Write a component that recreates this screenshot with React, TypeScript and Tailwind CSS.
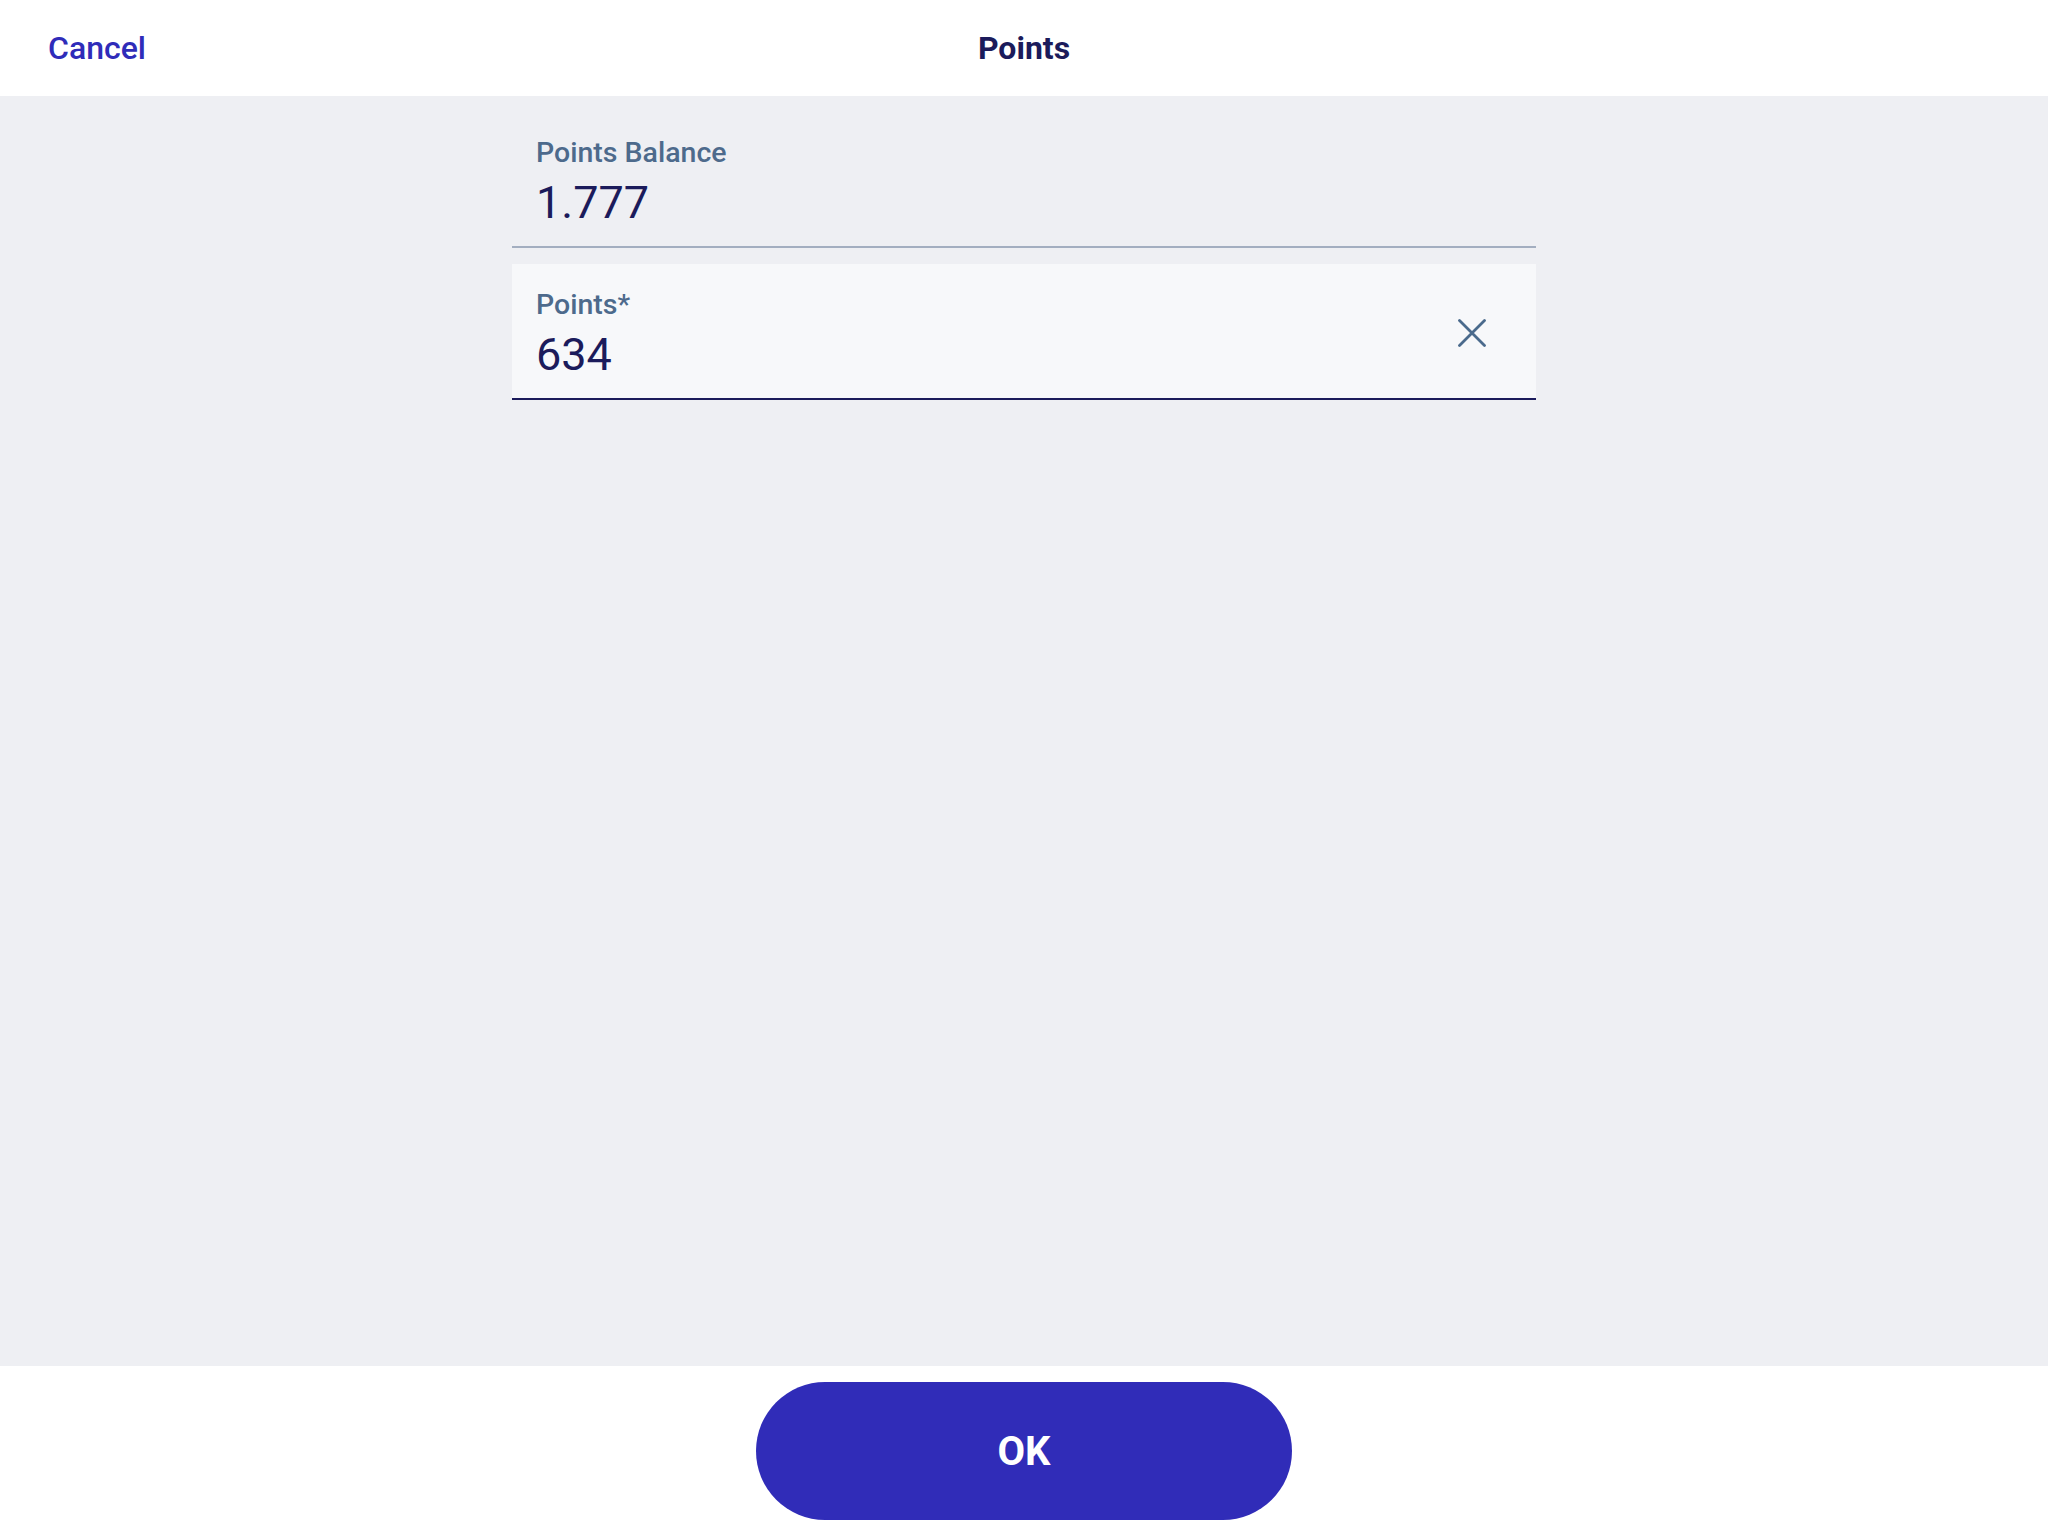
export default function App() {
  return (
    <div
      className="flex h-[1536px] w-full flex-col bg-[#eeeff3] text-[#1b1b5b]"
      style={{ fontFamily: "Roboto, 'Liberation Sans', sans-serif" }}
    >
      {/* Header */}
      <header className="relative flex h-[96px] shrink-0 items-center justify-center bg-white">
        <button className="absolute left-[48px] top-[28px] text-[32px] leading-[40px] font-medium text-[#2f2cb9]">
          Cancel
        </button>
        <h1 className="text-[32px] leading-[40px] font-bold text-[#1b1b5b]">Points</h1>
      </header>

      {/* Form */}
      <main className="flex flex-1 flex-col items-center gap-4 py-4">
        <div className="flex h-[136px] w-[1024px] flex-col border-b-2 border-[#a3aec0] px-6 pt-[25px]">
          <span className="text-[28.5px] leading-[32px] font-medium text-[#4d6a8c]">Points Balance</span>
          <span className="mt-[8px] text-[45px] leading-[52px] text-[#1b1b5b]">1.777</span>
        </div>

        <div className="flex h-[136px] w-[1024px] items-center border-b-2 border-[#1b1b5b] bg-[#f7f8fa] pr-[50px] pl-6">
          <div className="flex flex-1 flex-col self-start pt-[25px]">
            <span className="text-[28.5px] leading-[32px] font-medium text-[#4d6a8c]">Points*</span>
            <span className="mt-[8px] text-[45px] leading-[52px] text-[#1b1b5b]">634</span>
          </div>
          <button aria-label="Clear" className="mt-[4px] flex items-center justify-center">
            <svg width="28" height="28" viewBox="0 0 28 28" fill="none">
              <path d="M1.5 1.5L26.5 26.5M26.5 1.5L1.5 26.5" stroke="#4a6a8c" strokeWidth="2.8" strokeLinecap="round" />
            </svg>
          </button>
        </div>
      </main>

      {/* Footer */}
      <footer className="flex h-[170px] shrink-0 items-center justify-center bg-white">
        <button className="flex h-[138px] w-[536px] items-center justify-center rounded-full bg-[#302cb8] pt-[2px] text-[40px] leading-[48px] font-bold text-white">
          OK
        </button>
      </footer>
    </div>
  )
}
